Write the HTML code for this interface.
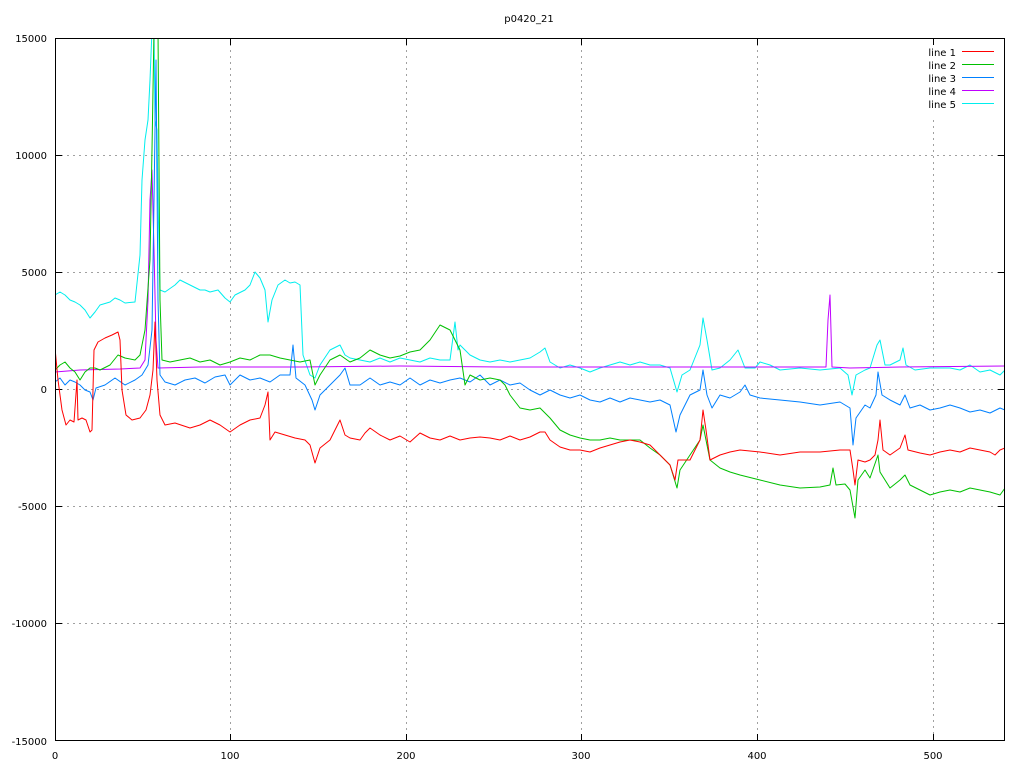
<!DOCTYPE html><html><head><style>html,body{margin:0;background:#fff}svg{display:block}text{font-family:"DejaVu Sans","Liberation Sans",sans-serif;font-size:10px;fill:#000}</style></head><body>
<svg width="1024" height="768" viewBox="0 0 1024 768" shape-rendering="crispEdges">
<g stroke="#a0a0a0" stroke-dasharray="2,4" stroke-width="1">
<line x1="230.5" y1="38" x2="230.5" y2="741"/><line x1="406.5" y1="38" x2="406.5" y2="741"/><line x1="581.5" y1="38" x2="581.5" y2="741"/><line x1="757.5" y1="38" x2="757.5" y2="741"/><line x1="933.5" y1="120" x2="933.5" y2="741"/>
<line x1="55" y1="155.5" x2="1005" y2="155.5"/><line x1="55" y1="272.5" x2="1005" y2="272.5"/><line x1="55" y1="389.5" x2="1005" y2="389.5"/><line x1="55" y1="506.5" x2="1005" y2="506.5"/><line x1="55" y1="623.5" x2="1005" y2="623.5"/>
</g>
<g stroke="#000" stroke-width="1">
<path d="M55 155.5h7M55 272.5h7M55 389.5h7M55 506.5h7M55 623.5h7M1005 155.5h-7M1005 272.5h-7M1005 389.5h-7M1005 506.5h-7M1005 623.5h-7M230.5 38v7M406.5 38v7M581.5 38v7M757.5 38v7M933.5 38v7M230.5 741v-7M406.5 741v-7M581.5 741v-7M757.5 741v-7M933.5 741v-7"/>
</g>
<g text-anchor="end"><text x="47" y="42">15000</text><text x="47" y="159">10000</text><text x="47" y="276">5000</text><text x="47" y="393">0</text><text x="47" y="510">-5000</text><text x="47" y="627">-10000</text><text x="47" y="745">-15000</text></g>
<g text-anchor="middle"><text x="55" y="759">0</text><text x="230" y="759">100</text><text x="406" y="759">200</text><text x="581" y="759">300</text><text x="757" y="759">400</text><text x="933" y="759">500</text><text x="529" y="22">p0420_21</text></g>
<g text-anchor="end" font-family="Liberation Mono,monospace"><text x="956" y="56">line 1</text><text x="956" y="69">line 2</text><text x="956" y="82">line 3</text><text x="956" y="95">line 4</text><text x="956" y="108">line 5</text></g>
<g stroke-width="1" shape-rendering="auto"><line x1="962" y1="51.5" x2="994" y2="51.5" stroke="#ff0000"/><line x1="962" y1="64.5" x2="994" y2="64.5" stroke="#00c000"/><line x1="962" y1="77.5" x2="994" y2="77.5" stroke="#0080ff"/><line x1="962" y1="90.5" x2="994" y2="90.5" stroke="#c000ff"/><line x1="962" y1="103.5" x2="994" y2="103.5" stroke="#00eeee"/></g>
<defs><clipPath id="c"><rect x="55" y="38" width="950" height="703"/></clipPath></defs>
<g clip-path="url(#c)" fill="none" stroke-width="1" shape-rendering="auto" stroke-linejoin="round">
<polyline stroke="#00eeee" points="55,295 60,292 65,295 70,300 75,302 80,305 85,310 90,318 95,312 100,305 110,302 115,298 120,300 125,303 135,302 140,255 142,180 145,140 148,120 150,80 152,30 154,30 155,120 157,130 158,200 160,290 165,292 175,285 180,280 190,285 200,290 205,290 210,292 218,290 225,298 230,302 235,295 245,290 250,285 255,272 260,278 265,290 268,322 272,300 278,285 285,280 290,283 295,282 300,285 303,355 310,375 315,378 320,365 330,350 340,345 345,355 350,358 360,360 370,362 380,358 390,362 400,358 410,360 420,362 430,358 440,360 450,360 455,322 458,350 460,345 470,355 480,360 490,362 500,360 510,362 520,360 530,358 540,352 545,348 550,362 560,368 570,365 580,368 590,372 600,368 610,365 620,362 630,365 640,362 650,365 660,365 670,368 677,392 682,375 690,370 700,345 703,318 707,340 712,370 720,368 730,360 738,350 745,368 755,368 760,362 770,365 780,370 800,368 820,370 840,368 848,375 852,395 856,375 865,370 870,368 877,345 880,340 885,365 890,365 900,360 903,348 906,365 915,370 930,368 950,368 960,370 970,365 980,372 990,370 1000,375 1005,370"/>
<polyline stroke="#c000ff" points="55,372 80,370 120,369 140,368 145,360 148,300 150,200 152,170 154,250 156,340 158,368 200,367 300,367 400,366 500,367 600,367 700,367 800,367 826,367 828,320 830,295 832,367 850,368 900,367 1005,366"/>
<polyline stroke="#0080ff" points="55,382 60,378 65,385 70,380 75,382 80,385 85,390 90,392 93,400 96,388 105,385 115,378 125,385 135,380 142,375 148,365 152,330 154,200 156,60 158,300 160,375 165,382 175,385 185,380 195,378 205,383 215,377 225,375 230,385 240,375 250,380 260,378 270,382 280,375 290,375 293,345 296,378 305,385 312,400 315,410 320,395 330,385 340,375 345,368 350,385 360,385 370,378 380,385 390,382 400,385 410,378 420,385 430,380 440,383 450,380 460,378 470,382 480,375 490,385 500,380 510,385 520,383 530,390 540,395 550,390 560,395 570,398 580,395 590,400 600,402 610,398 620,402 630,398 640,400 650,402 660,400 670,405 676,432 680,415 690,395 700,390 703,370 707,395 712,408 720,395 730,398 740,392 745,385 750,395 760,398 780,400 800,402 820,405 840,402 850,408 853,445 856,418 865,405 870,408 876,395 878,372 882,395 890,400 900,405 905,395 910,408 920,405 930,410 940,408 950,405 960,408 970,412 980,410 990,413 1000,408 1005,410"/>
<polyline stroke="#00c000" points="55,370 60,365 65,362 70,368 75,372 80,380 85,372 90,368 95,368 100,370 110,365 118,355 125,358 135,360 140,355 145,330 150,260 152,150 154,30 156,30 158,30 160,300 162,360 170,362 180,360 190,358 200,362 210,360 220,365 230,362 240,358 250,360 260,355 270,355 280,358 290,360 300,362 310,360 315,385 320,375 330,360 340,355 350,362 360,358 370,350 380,355 390,358 400,356 410,352 420,350 430,340 440,325 450,330 460,350 465,385 470,375 480,380 490,378 500,380 505,385 510,395 520,408 530,410 540,408 550,418 560,430 570,435 580,438 590,440 600,440 610,438 620,440 630,440 640,440 650,448 660,455 670,465 677,488 680,470 690,455 700,440 703,425 707,445 710,460 720,468 730,472 740,475 760,480 780,485 800,488 820,487 830,485 833,468 836,485 845,484 850,490 855,518 858,480 865,470 870,478 878,455 880,472 890,488 900,480 905,475 910,485 920,490 930,495 940,492 950,490 960,492 970,488 980,490 990,492 1000,495 1005,488"/>
<polyline stroke="#ff0000" points="55,348 58,380 62,410 66,425 70,420 74,422 77,380 78,420 82,418 86,420 90,432 92,430 94,350 98,342 105,338 112,335 118,332 120,340 122,390 126,415 132,420 140,418 146,410 150,395 153,370 155,322 157,380 160,415 165,425 175,423 190,428 200,425 210,420 220,425 230,432 240,425 250,420 260,418 265,405 268,392 270,440 275,432 285,435 295,438 305,440 310,445 315,463 320,448 330,440 340,420 345,435 350,438 360,440 365,433 370,428 380,435 390,440 400,436 410,442 420,433 430,438 440,440 450,436 460,440 470,438 480,437 490,438 500,440 510,436 520,440 530,437 540,432 545,432 550,440 560,447 570,450 580,450 590,452 600,448 610,445 620,442 630,440 640,442 650,445 660,455 670,465 675,480 678,460 690,460 700,440 703,410 706,430 710,460 720,455 730,452 740,450 760,452 780,455 800,452 820,452 840,450 850,450 853,470 855,485 858,460 865,462 870,460 875,455 878,440 880,420 883,450 890,455 900,448 905,435 908,450 920,453 930,455 940,452 950,450 960,452 970,448 980,450 990,452 995,455 1000,450 1005,448"/>
</g>
<rect x="55.5" y="38.5" width="949" height="702" fill="none" stroke="#000" stroke-width="1"/>
</svg>
</body></html>
